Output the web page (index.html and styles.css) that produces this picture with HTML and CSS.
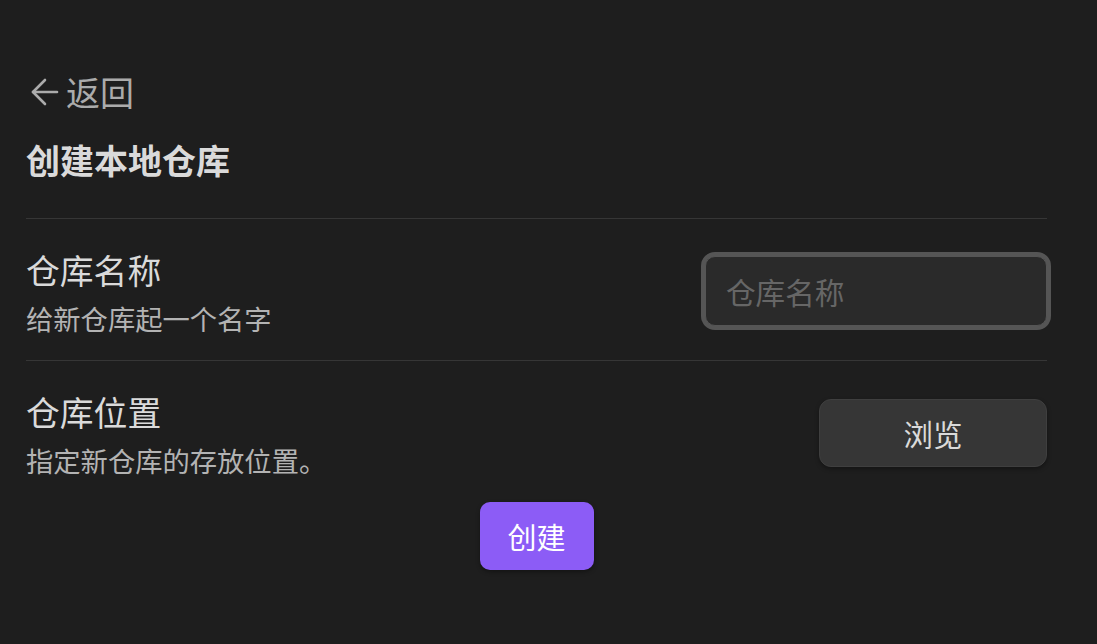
FILE: index.html
```html
<!DOCTYPE html>
<html lang="zh">
<head>
<meta charset="utf-8">
<link rel="stylesheet" href="styles.css">
</head>
<body>
<div class="page">
  <div class="back">
    <svg class="back-icon" viewBox="0 0 28 28" width="28" height="28" fill="none" stroke="currentColor" stroke-width="2.6" stroke-linecap="round" stroke-linejoin="round"><path d="M26 14H2"/><path d="M14 26L2 14 14 2"/></svg>
    <span>返回</span>
  </div>
  <h1 class="title">创建本地仓库</h1>
  <div class="setting">
    <div class="info">
      <div class="name">仓库名称</div>
      <div class="desc">给新仓库起一个名字</div>
    </div>
    <div class="control">
      <input class="text-input" type="text" placeholder="仓库名称">
    </div>
  </div>
  <div class="setting setting-last">
    <div class="info">
      <div class="name">仓库位置</div>
      <div class="desc">指定新仓库的存放位置。</div>
    </div>
    <div class="control">
      <button class="btn">浏览</button>
    </div>
  </div>
  <div class="actions">
    <button class="btn-cta">创建</button>
  </div>
</div>
</body>
</html>
```

FILE: styles.css
```css
* { box-sizing: border-box; }
html, body {
  margin: 0;
  padding: 0;
  background: #1e1e1e;
  font-family: "Noto Sans CJK SC", "Noto Sans", sans-serif;
}
.page {
  width: 1097px;
  height: 644px;
  padding: 71px 50px 0 26px;
}
.back {
  display: flex;
  align-items: center;
  gap: 7px;
  color: #ababab;
  font-size: 34px;
  line-height: 42px;
  height: 42px;
}
.back-icon {
  margin-left: 5px;
  color: #ababab;
}
.title {
  margin: 27px 0 0 0;
  font-size: 34px;
  line-height: 40px;
  font-weight: 700;
  color: #dadada;
  padding-bottom: 38px;
  border-bottom: 1.5px solid #363636;
}
.setting {
  display: flex;
  align-items: center;
  justify-content: space-between;
  padding: 29px 0 24px 0;
  border-bottom: 1.5px solid #363636;
}
.setting-last {
  border-bottom: none;
}
.info {
  display: flex;
  flex-direction: column;
}
.name {
  font-size: 33.8px;
  line-height: 44px;
  color: #dadada;
}
.desc {
  margin-top: 8px;
  font-size: 27.3px;
  line-height: 36px;
  color: #b3b3b3;
}
.text-input {
  width: 342px;
  height: 70px;
  margin-top: -2px;
  background: #2a2a2a;
  border: 1px solid #555;
  box-shadow: 0 0 0 4px #555;
  border-radius: 10px;
  padding: 0 20px;
  font-family: inherit;
  font-size: 29.6px;
  color: #dadada;
  outline: none;
}
.text-input::placeholder {
  color: #666;
}
.btn {
  width: 228px;
  height: 68px;
  margin-top: -2px;
  background: #363636;
  color: #dadada;
  border: 1px solid #3f3f3f;
  border-radius: 12px;
  box-shadow: 0 2px 4px rgba(0,0,0,0.35);
  font-family: inherit;
  font-size: 29.5px;
}
.actions {
  display: flex;
  justify-content: center;
}
.btn-cta {
  width: 114px;
  height: 68px;
  background: #8c5cf6;
  color: #fff;
  border: none;
  border-radius: 10px;
  box-shadow: 0 2px 4px rgba(0,0,0,0.35);
  font-family: inherit;
  font-size: 29px;
}
```
